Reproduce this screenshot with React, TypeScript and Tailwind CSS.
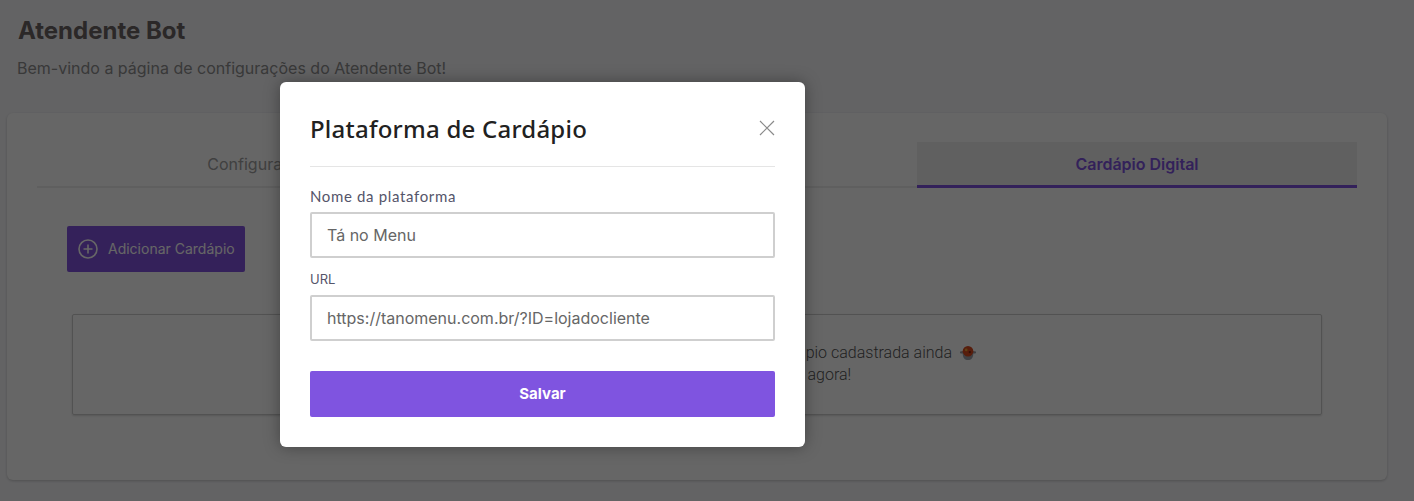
import React from 'react';

function PotIcon() {
  return (
    <svg width="16" height="16" viewBox="0 0 18 18" className="ml-2 inline-block align-[-3px]">
      <rect x="0" y="7" width="18" height="2.5" rx="1.2" fill="#9a9aa2" />
      <path d="M3 9 C3 15 5.5 17 9 17 C12.5 17 15 15 15 9 Z" fill="#a0a4ac" />
      <circle cx="9" cy="7" r="6" fill="#d9491f" />
      <circle cx="7" cy="5.5" r="1.5" fill="#f0a030" />
      <circle cx="11" cy="8" r="1.3" fill="#7a2a10" />
    </svg>
  );
}

function Tab({ label, active = false, labelClass = '' }: { label: string; active?: boolean; labelClass?: string }) {
  return (
    <div
      className={`flex h-[46px] flex-1 items-center justify-center text-base ${
        active
          ? 'border-b-[3px] border-[#7f54e0] bg-[#f0f0f0] pt-[1px] font-semibold text-[#7f54e0]'
          : 'border-b-2 border-[#eeeeee] text-[#a0a0a0]'
      }`}
    >
      <span className={labelClass}>{label}</span>
    </div>
  );
}

function Field({ label, value, labelFont }: { label: string; value: string; labelFont: string }) {
  return (
    <div>
      <label className={`mb-[5px] block h-[22px] leading-[22px] text-[#55556a] ${labelFont}`}>{label}</label>
      <input
        readOnly
        defaultValue={value}
        className="block h-[46px] w-full rounded-[2px] border-2 border-[#cfcfcf] bg-white px-[15px] font-['Inter',sans-serif] text-base text-[#666666] outline-none"
      />
    </div>
  );
}

export default function App() {
  return (
    <div className="relative h-[501px] w-[1414px] overflow-hidden bg-[#f8f8fb] font-['Inter',sans-serif]">
      <div className="px-[7px] pt-[16px]">
        <h1 className="ml-[11px] h-[30px] text-2xl leading-[30px] font-bold text-[#6b6464]">Atendente Bot</h1>
        <p className="mt-[10px] ml-[10px] h-[24px] text-base leading-[24px] text-[#8e8e8e]">
          Bem-vindo a página de configurações do Atendente Bot!
        </p>
        <div className="mt-[33px] h-[367px] w-[1380px] rounded-md bg-white px-[30px] pt-[29px] shadow-[0_1px_3px_rgba(0,0,0,0.2)]">
          <div className="flex">
            <Tab label="Configurações" labelClass="ml-[12px]" />
            <Tab label="Horários" />
            <Tab label="Cardápio Digital" active />
          </div>
          <button className="mt-[38px] ml-[30px] flex h-[46px] w-[178px] items-center gap-[10px] rounded-[2px] bg-[#8354e0] pl-[11px] text-sm text-white">
            <svg width="20" height="20" viewBox="0 0 20 20" fill="none" stroke="currentColor" strokeWidth="1.6">
              <circle cx="10" cy="10" r="9" />
              <path d="M10 5.5v9M5.5 10h9" />
            </svg>
            Adicionar Cardápio
          </button>
          <div className="mt-[42px] ml-[35px] flex h-[101px] w-[1250px] flex-col items-center justify-center rounded-[2px] border border-[#cccccc] pb-[2px] font-['Roboto',sans-serif] leading-[22px] font-light text-[#555555] shadow-[0_1px_2px_rgba(0,0,0,0.15)]">
            <p className="pl-[14px]">
              Você ainda não possui nenhuma plataforma de cardápio cadastrada ainda
              <PotIcon />
            </p>
            <p>Clique no botão acima e cadastre um agora!</p>
          </div>
        </div>
      </div>

      <div className="absolute inset-0 bg-black/60 pt-[82px] pl-[280px]">
        <div className="h-[365px] w-[525px] rounded-md bg-white px-[30px] shadow-[0_0_16px_rgba(0,0,0,0.35)]">
          <div className="flex h-[85px] items-center justify-between border-b border-[#e5e5e5] pt-[8px]">
            <h2 className="pt-[2px] font-['Noto_Sans',sans-serif] text-2xl font-medium tracking-[0.23px] text-[#212121]">Plataforma de Cardápio</h2>
            <svg width="16" height="16" viewBox="0 0 16 16" fill="none" stroke="#8a8a8a" strokeWidth="1.2">
              <path d="M1 1l14 14M15 1L1 15" />
            </svg>
          </div>
          <div className="mt-[18px] flex flex-col gap-[10px]">
            <Field label="Nome da plataforma" value="Tá no Menu" labelFont="font-['Lato',sans-serif] text-[15px] tracking-[0.65px]" />
            <Field label="URL" value="https://tanomenu.com.br/?ID=lojadocliente" labelFont="font-['Inter',sans-serif] text-[13px]" />
          </div>
          <button className="mt-[30px] h-[46px] w-full rounded-[2px] bg-[#7f54e0] font-['Inter',sans-serif] text-[15px] font-bold text-white">
            Salvar
          </button>
        </div>
      </div>
    </div>
  );
}
